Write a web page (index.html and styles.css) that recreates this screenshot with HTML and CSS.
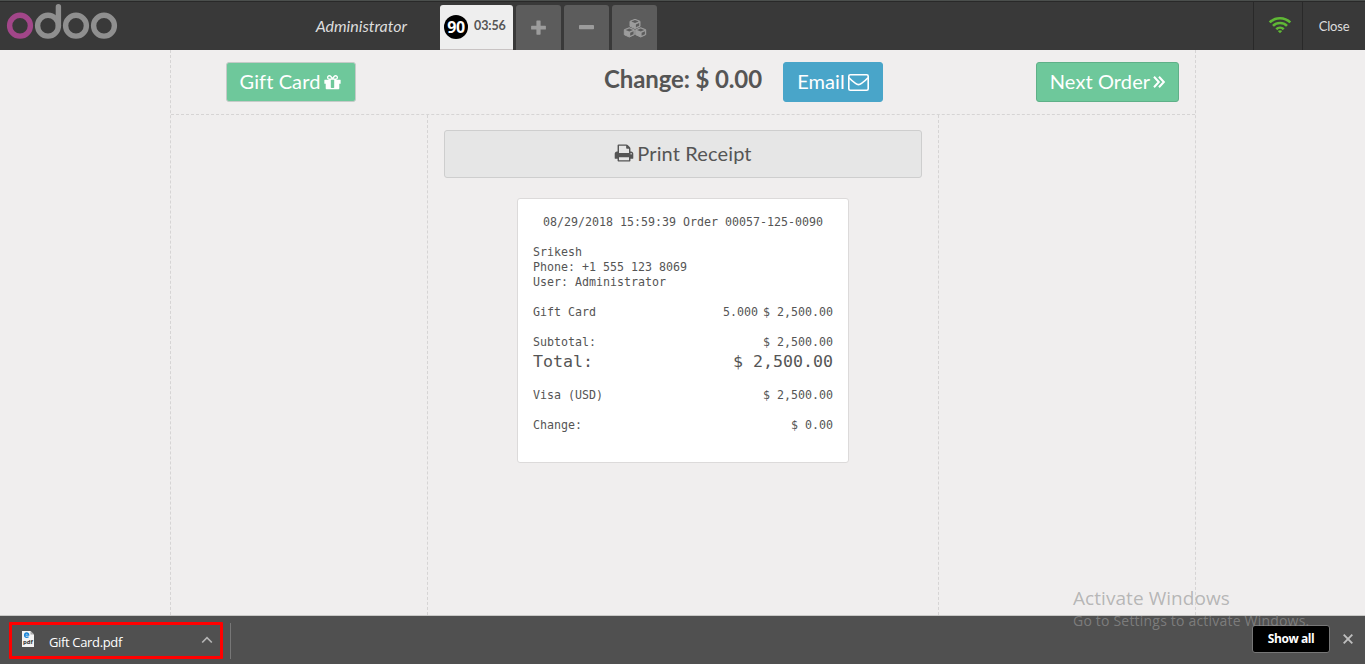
FILE: index.html
```html
<!DOCTYPE html>
<html lang="en">
<head>
<meta charset="utf-8">
<title>Point of Sale</title>
<link rel="stylesheet" href="styles.css">
</head>
<body>
<div class="pos">
  <header class="topbar">
    <svg class="logo" width="120" height="44" viewBox="0 0 120 44" fill="none" stroke="#8f8f8f" stroke-width="5.4">
      <circle cx="20" cy="25.7" r="10.4" stroke="#a24689"/>
      <circle cx="48" cy="25.7" r="10.4"/>
      <path d="M58.4 26V6.8" stroke-linecap="round"/>
      <circle cx="76" cy="25.7" r="10.4"/>
      <circle cx="104" cy="25.7" r="10.4"/>
    </svg>
    <div class="username">Administrator</div>
    <nav class="tabs">
      <div class="tab tab-active"><span class="badge">90</span><span class="time">03:56</span></div>
      <div class="tab"><svg width="15" height="15" viewBox="0 0 15 15"><path fill="#9c9c9c" d="M6 .5h3q.6 0 .6.6v4.700h4.700q.6 0 .6.6v2.500q0 .6-.6.6H9.600v4.600q0 .6-.6.6H6q-.6 0-.6-.6V9.500H.7q-.6 0-.6-.6V6.400q0-.6.6-.6h4.700V1.100q0-.6.6-.6z"/></svg></div>
      <div class="tab"><svg width="15" height="15" viewBox="0 0 15 15"><rect x="0" y="5" width="15" height="4.200" rx=".8" fill="#9c9c9c"/></svg></div>
      <div class="tab"><svg width="24" height="20" viewBox="0 0 24 20">
        <g fill="#9c9c9c" stroke="#9c9c9c" stroke-width="1" stroke-linejoin="round">
          <path d="M12 1.300l5 2v5l-5 2.300-5-2.300v-5z"/>
          <path d="M6.300 9.700l5 2v5l-5 2.300-5-2.300v-5z"/>
          <path d="M17.700 9.700l5 2v5l-5 2.300-5-2.300v-5z"/>
        </g>
        <g fill="#5c5c5c">
          <path d="M12 2l3.700 1.500L12 5.100 8.300 3.500zM12.900 6.400l3.300-1.500v2.900l-3.300 1.500z"/>
          <path d="M6.300 10.400l3.700 1.500-3.700 1.600-3.700-1.600zM7.200 14.800l3.300-1.500v2.900l-3.300 1.500z"/>
          <path d="M17.700 10.400l3.700 1.500-3.700 1.600-3.700-1.600zM18.600 14.800l3.300-1.500v2.900l-3.300 1.500z"/>
        </g>
      </svg></div>
    </nav>
    <div class="wifi"><svg width="24" height="18" viewBox="0 0 24 18" fill="none" stroke="#5fb835" stroke-width="2.600">
      <path d="M1.700 6.400a14.700 14.700 0 0 1 20.600 0M5 9.900a10 10 0 0 1 14 0M8.300 13.200a5.300 5.300 0 0 1 7.400 0"/>
      <path fill="#5fb835" stroke="none" d="M9.800 15l2.200 2.300 2.200-2.300q-2.200-1.600-4.400 0z"/>
    </svg></div>
    <div class="close">Close</div>
  </header>

  <main class="screen">
    <div class="actions">
      <button class="btn btn-gift">Gift Card
        <svg width="19" height="19" viewBox="0 0 1792 1792" fill="#fff"><path d="M1056 1356v-716h-320v716q0 25 18 38.500t46 13.500h192q28 0 46-13.500t18-38.500zm-456-844h195l-126-161q-26-31-69-31-40 0-68 28t-28 68 28 68 68 28zm688-96q0-40-28-68t-68-28q-43 0-69 31l-125 161h194q40 0 68-28t28-68zm376 256v320q0 14-9 23t-23 9h-96v416q0 40-28 68t-68 28h-1088q-40 0-68-28t-28-68v-416h-96q-14 0-23-9t-9-23v-320q0-14 9-23t23-9h440q-93 0-158.500-65.500t-65.500-158.500 65.500-158.500 158.500-65.500q107 0 168 77l128 165 128-165q61-77 168-77 93 0 158.500 65.500t65.500 158.500-65.500 158.500-158.500 65.500h440q14 0 23 9t9 23z"/></svg>
      </button>
      <h1 class="change">Change: $ 0.00</h1>
      <button class="btn btn-email">Email
        <svg width="21" height="17" viewBox="0 0 21 17" fill="none" stroke="#fff" stroke-width="1.600"><rect x=".8" y=".8" width="19.400" height="15.400" rx="1.500"/><path d="M1 3.800q3 3.300 6.500 5.600 3 2.400 6 0Q17 7.100 20 3.800"/></svg>
      </button>
      <button class="btn btn-next">Next Order
        <svg width="12" height="12" viewBox="0 0 12 12" fill="none" stroke="#fff" stroke-width="2"><path d="M1 .8L5.800 6 1 11.200M6 .8L10.800 6 6 11.200"/></svg>
      </button>
    </div>
    <div class="columns">
      <div></div>
      <section class="center">
        <button class="print"><svg width="20" height="20" viewBox="0 0 1792 1792" fill="#555"><path d="M448 1536h896v-256h-896v256zm0-640h896v-384h-160q-40 0-68-28t-28-68v-160h-640v640zm1152 64q0-26-19-45t-45-19-45 19-19 45 19 45 45 19 45-19 19-45zm128 0v416q0 13-9.500 22.500t-22.500 9.500h-224v160q0 40-28 68t-68 28h-960q-40 0-68-28t-28-68v-160h-224q-13 0-22.500-9.500t-9.500-22.500v-416q0-79 56.500-135.500t135.500-56.500h64v-544q0-40 28-68t68-28h672q40 0 88 20t76 48l152 152q28 28 48 76t20 88v256h64q79 0 135.500 56.500t56.500 135.500z"/></svg>Print Receipt</button>
        <article class="receipt">
          <div class="order">08/29/2018 15:59:39 Order 00057-125-0090</div>
          <div class="info">Srikesh<br>Phone: +1 555 123 8069<br>User: Administrator</div>
          <div class="line gap"><span>Gift Card</span><span class="qty">5.000</span><span>$ 2,500.00</span></div>
          <div class="line gap"><span>Subtotal:</span><span>$ 2,500.00</span></div>
          <div class="line total"><span>Total:</span><span>$ 2,500.00</span></div>
          <div class="line gap"><span>Visa (USD)</span><span>$ 2,500.00</span></div>
          <div class="line gap"><span>Change:</span><span>$ 0.00</span></div>
        </article>
      </section>
      <div></div>
    </div>
  </main>

  <footer class="downloads">
    <div class="file">
      <svg width="12" height="16" viewBox="0 0 12 16"><path fill="#f4f4f4" d="M0 0h8.500L12 3.500V16H0z"/><path fill="#aaa" d="M8.500 0v3.500H12z"/><path d="M2.500 4.100h4.200Q6.500 2 4.700 2 2.600 2 2.600 4.200t2.200 2.100q1 0 1.800-.5" fill="none" stroke="#1683d8" stroke-width="1.300"/><text class="pdf" x="1" y="12.500">pdf</text></svg>
      <span class="name">Gift Card.pdf</span>
      <svg class="caret" width="12" height="8" viewBox="0 0 12 8" fill="none" stroke="#b5b5b5" stroke-width="1.700"><path d="M1.200 6.500L6 1.700l4.800 4.800"/></svg>
    </div>
    <div class="divider"></div>
    <button class="showall">Show all</button>
    <svg class="dismiss" width="10" height="10" viewBox="0 0 10 10" stroke="#bebebe" stroke-width="1.900"><path d="M.7.7l8.600 8.600M9.300.7L.7 9.300"/></svg>
  </footer>
  <div class="watermark"><div class="wm-title">Activate Windows</div><div class="wm-text">Go to Settings to activate Windows.</div></div>
</div>
</body>
</html>
```
FILE: styles.css
```css
* { box-sizing: border-box; }
body { margin: 0; overflow: hidden; font-family: Lato, sans-serif; color: #555; }
button { font: inherit; padding: 0; margin: 0; white-space: nowrap; }
svg { display: block; flex: none; }
.pos { position: relative; width: 1365px; height: 664px; display: flex; flex-direction: column; background: #f0eeee; }

.topbar { height: 50px; flex: none; display: flex; background: #393939; border-top: 1px solid #4b4f4d; box-shadow: inset 0 1px #292929; }
.logo { margin-top: -1px; }
.username { width: 287px; text-align: right; font-size: 16px; font-style: italic; line-height: 49px; color: #ddd; }
.tabs { display: flex; gap: 3px; margin-left: 33px; padding-top: 4px; }
.tab { width: 45px; display: flex; align-items: center; justify-content: center; background: #5c5c5c; border-radius: 3px 3px 0 0; }
.tab-active { width: 73px; justify-content: flex-start; background: #eee; border-bottom: 1px solid #c8c3c3; padding-left: 4px; }
.badge { width: 24px; height: 24px; border-radius: 50%; background: #000; color: #fff; font: bold 16px/24px "Open Sans", sans-serif; letter-spacing: -.5px; text-align: center; }
.time { margin-left: 6px; padding-bottom: 3px; font-size: 12.5px; font-weight: 700; letter-spacing: -.1px; }
.wifi { margin-left: auto; width: 49px; border-left: 1px solid #292929; display: flex; padding: 15px 0 0 14px; }
.close { width: 63px; border-left: 1px solid #292929; text-align: center; font-size: 13px; letter-spacing: -.2px; line-height: 50px; color: #ddd; }

.screen { width: 1026px; height: 565px; margin-left: 170px; border: dashed #d6d4d4; border-width: 0 1px; display: flex; flex-direction: column; }
.actions { height: 65px; flex: none; display: flex; align-items: flex-start; padding-top: 12px; border-bottom: 1px dashed #d6d4d4; }
.btn { height: 40px; display: flex; align-items: center; justify-content: center; gap: 3px; padding-bottom: 2px; font-size: 20px; letter-spacing: .1px; color: #fff; border-radius: 3px; background: #6ec89b; border: 1px solid #5fb088; }
.btn svg { margin-top: 2px; }
.btn-gift { width: 130px; margin-left: 55px; border-color: #c5cbc8; }
.change { width: 159px; margin: 0 0 0 248px; font-size: 24px; line-height: 33px; letter-spacing: -.12px; white-space: nowrap; }
.btn-email { width: 100px; margin-left: 20px; background: #49a5c9; border-color: #49a5c9; }
.btn-next { width: 143px; margin-left: 153px; }
.columns { flex: 1; display: grid; grid-template-columns: 256px 512px 256px; }
.center { border: dashed #d6d4d4; border-width: 0 1px; padding: 15px 16px; display: flex; flex-direction: column; align-items: center; }
.print { width: 478px; height: 48px; display: flex; align-items: center; justify-content: center; gap: 3px; padding-bottom: 2px; font-size: 20px; letter-spacing: .13px; color: #555; background: #e6e6e6; border: 1px solid #cecece; border-radius: 3px; }
.receipt { width: 332px; height: 265px; margin-top: 20px; padding: 16px 15px 14px; background: #fff; border: 1px solid #dcdada; border-radius: 3px; font-family: "DejaVu Sans Mono", monospace; font-size: 11.630px; line-height: 15px; }
.order { text-align: center; white-space: nowrap; }
.info { margin-top: 15px; }
.line { display: flex; justify-content: space-between; }
.gap { margin-top: 15px; }
.qty { margin: 0 5px 0 auto; }
.total { font-size: 16.610px; line-height: 23px; }

.downloads { flex: 1; display: flex; align-items: flex-start; background: #505050; border-top: 1px solid #c9c9c7; padding: 6px 0 0 9px; }
.file { width: 214px; height: 37px; border: 3px solid #f00; border-radius: 1px; display: flex; align-items: center; padding: 0 10px; }
.file > svg:first-child { margin-top: -4px; }
.pdf { font: bold 6px "Open Sans", sans-serif; fill: #333; }
.name { margin-left: 15px; padding-top: 2px; font: 13px "Open Sans", sans-serif; letter-spacing: -.35px; color: #fff; }
.caret { margin: -2px -3px 0 auto; }
.divider { width: 1px; height: 36px; margin: 1px 0 0 7px; background: #777; }
.showall { width: 78px; height: 28px; margin: 3px 0 0 auto; padding-bottom: 1px; background: #000; border: 1px solid #777; border-radius: 3px; color: #fff; font: bold 12px "Open Sans", sans-serif; letter-spacing: -.45px; }
.dismiss { margin: 12px 12px 0 13px; }
.watermark { position: absolute; left: 1073px; top: 585px; font-family: "Open Sans", sans-serif; color: rgba(150,150,150,.65); white-space: nowrap; pointer-events: none; }
.wm-title { font-size: 19px; line-height: 26px; letter-spacing: .06px; }
.wm-text { font-size: 14px; line-height: 20px; letter-spacing: .2px; }
```
